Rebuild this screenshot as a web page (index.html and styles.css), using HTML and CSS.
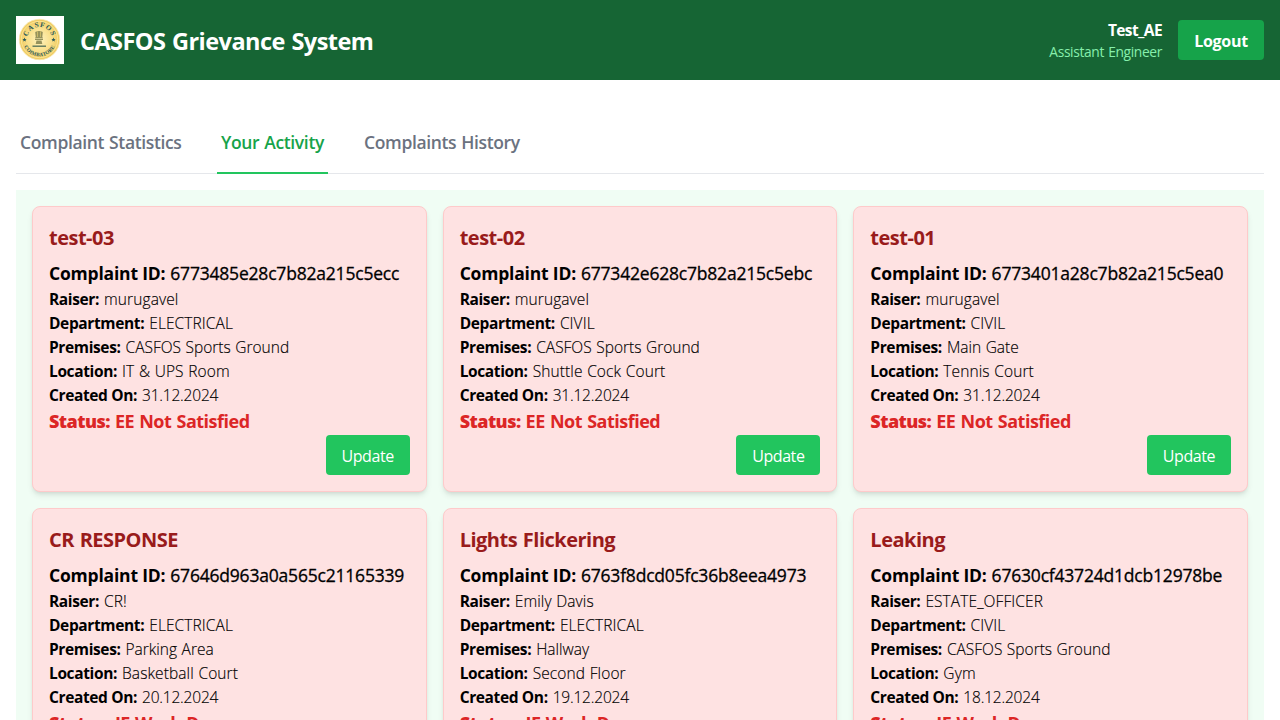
FILE: index.html
```
<!DOCTYPE html>
<html lang="en">
<head>
<meta charset="utf-8">
<title>CASFOS Grievance System</title>
<link rel="stylesheet" href="styles.css">
</head>
<body>
<header class="header">
  <div class="brand">
    <svg class="logo" viewBox="0 0 48 48" role="img" aria-label="CASFOS Coimbatore">
      <defs>
        <radialGradient id="gold"><stop offset="0" stop-color="#fff3bd"/><stop offset=".6" stop-color="#f9df8a"/><stop offset="1" stop-color="#efc95c"/></radialGradient>
        <path id="arc-top" d="M11 23.500a12.500 12.500 0 0 1 25 0"/>
        <path id="arc-bottom" d="M6.700 23.500a16.800 16.800 0 0 0 33.600 0"/>
      </defs>
      <rect width="48" height="48" fill="#fff"/>
      <circle cx="23.5" cy="23.5" r="20.2" fill="url(#gold)" stroke="#f8e7b0" stroke-width=".8"/>
      <circle cx="23.5" cy="23.5" r="18.2" fill="none" stroke="#fff0b0" stroke-width=".6"/>
      <text class="seal seal-top"><textPath href="#arc-top" startOffset="50%">CASFOS</textPath></text>
      <text class="seal seal-bottom"><textPath href="#arc-bottom" startOffset="50%">COIMBATORE</textPath></text>
      <path d="M8.5 21.500l.6 1.4 1.5.1-1.1 1 .3 1.5-1.3-.8-1.3.8.3-1.5-1.1-1 1.5-.1zM37.5 21.500l.6 1.4 1.5.1-1.1 1 .3 1.5-1.3-.8-1.3.8.3-1.5-1.1-1 1.5-.1z" fill="#28585a"/>
      <g fill="#85834e" opacity=".85"><path d="M19.200 16q4-2 7.600 0l-.5 5 .8 1.200h-8.200l.8-1.200z"/><path d="M19 22.800h8v1.200h-8zM20.500 24.500h5l.8 3.500h-6.600z"/><path d="M16.500 29.500h13.500v1.400h-13.500z" fill="#3e6251"/></g>
      <path d="M21.500 15.500v5.500M24.500 15.500v5.500" stroke="#dcc86e" stroke-width=".7"/>
    </svg>
    <h1 class="brand-name">CASFOS Grievance System</h1>
  </div>
  <div class="account">
    <div class="user"><p class="user-name">Test_AE</p><p class="user-role">Assistant Engineer</p></div>
    <button class="logout">Logout</button>
  </div>
</header>
<main class="main">
  <nav class="tabs">
    <button class="tab">Complaint Statistics</button>
    <button class="tab tab-active">Your Activity</button>
    <button class="tab tab-history">Complaints History</button>
  </nav>
  <section class="cards" id="cards"></section>
</main>
<script src="cards.js"></script>
</body>
</html>
```
FILE: cards.js
```
const complaints = [
  ["test-03", "6773485e28c7b82a215c5ecc", "murugavel", "ELECTRICAL", "CASFOS Sports Ground", "IT & UPS Room", "31.12.2024", "EE Not Satisfied"],
  ["test-02", "677342e628c7b82a215c5ebc", "murugavel", "CIVIL", "CASFOS Sports Ground", "Shuttle Cock Court", "31.12.2024", "EE Not Satisfied"],
  ["test-01", "6773401a28c7b82a215c5ea0", "murugavel", "CIVIL", "Main Gate", "Tennis Court", "31.12.2024", "EE Not Satisfied"],
  ["CR RESPONSE", "67646d963a0a565c21165339", "CR!", "ELECTRICAL", "Parking Area", "Basketball Court", "20.12.2024", "JE Work Done"],
  ["Lights Flickering", "6763f8dcd05fc36b8eea4973", "Emily Davis", "ELECTRICAL", "Hallway", "Second Floor", "19.12.2024", "JE Work Done"],
  ["Leaking", "67630cf43724d1dcb12978be", "ESTATE_OFFICER", "CIVIL", "CASFOS Sports Ground", "Gym", "18.12.2024", "JE Work Done"]
];
const labels = ["Complaint ID", "Raiser", "Department", "Premises", "Location", "Created On", "Status"];

function element(tag, className, text) {
  const node = document.createElement(tag);
  node.className = className;
  if (text) node.textContent = text;
  return node;
}

for (const [title, ...values] of complaints) {
  const card = element("article", "card");
  card.append(element("h2", "card-title", title));
  values.forEach((value, i) => {
    const name = labels[i].split(" ")[0].toLowerCase();
    const row = element("p", "row row-" + name);
    row.append(element("strong", "label", labels[i] + ":"), element("span", "value", value));
    card.append(row);
  });
  const actions = element("div", "actions");
  actions.append(element("button", "update", "Update"));
  card.append(actions);
  document.getElementById("cards").append(card);
}
```
FILE: styles.css
```
* { box-sizing: border-box; margin: 0; }
html { overflow: hidden; }
body { height: 720px; overflow: hidden; background: #fff; color: #000; font: 16px/24px "Open Sans", "Noto Sans", sans-serif; }
button { font: inherit; border: 0; padding: 0; background: none; }
.header { height: 80px; padding: 16px; background: #166534; color: #fff; display: flex; justify-content: space-between; align-items: center; }
.brand { display: flex; align-items: center; gap: 16px; }
.logo { width: 48px; height: 48px; display: block; }
.seal { font-family: "Liberation Serif", serif; font-weight: 700; fill: #28585a; text-anchor: middle; }
.seal-top { font-size: 7.2px; letter-spacing: .9px; }
.seal-bottom { font-size: 5.2px; letter-spacing: .2px; }
.brand-name { font-size: 23.5px; line-height: 32px; font-weight: 700; letter-spacing: -.54px; word-spacing: 1px; padding-top: 2px; }
.account { display: flex; align-items: center; gap: 16px; }
.user { text-align: right; }
.user-name { font-size: 15.5px; line-height: 24px; font-weight: 700; letter-spacing: -.6px; }
.user-role { font-size: 13.8px; line-height: 20px; color: #86efac; letter-spacing: -.36px; word-spacing: 1px; }
.logout { width: 86px; height: 40px; border-radius: 4px; background: #16a34a; color: #fff; font-weight: 700; letter-spacing: -.3px; padding-top: 1px; }
.main { padding: 32px 16px 16px; }
.tabs { height: 62px; display: flex; gap: 32px; border-bottom: 1px solid #e5e7eb; margin-bottom: 16px; }
.tab { width: 169px; height: 62px; padding-left: 4px; border-bottom: 2px solid transparent; color: #6b7280; font-size: 17.5px; line-height: 28px; font-weight: 600; letter-spacing: -.36px; word-spacing: .8px; text-align: left; white-space: nowrap; }
.tab-active { width: 111px; color: #16a34a; border-color: #22c55e; }
.tab-history { width: 165px; }
.cards { background: #f0fdf4; padding: 16px; display: grid; grid-template-columns: repeat(3, 1fr); gap: 16px; }
.card { min-width: 0; padding: 16px; border: 1px solid #fecaca; border-radius: 8px; background: #fee2e2; box-shadow: 0 4px 6px -1px rgba(0,0,0,.1), 0 2px 4px -2px rgba(0,0,0,.1); }
.card-title { font-size: 20px; line-height: 28px; font-weight: 700; color: #991b1b; letter-spacing: -.5px; word-spacing: 1px; padding-top: 1px; margin-bottom: 7px; }
.row { display: flex; gap: 5px; white-space: nowrap; font-size: 15.5px; font-weight: 300; }
.label { font-weight: 700; letter-spacing: -.37px; }
.value { letter-spacing: .1px; word-spacing: .5px; -webkit-text-stroke: .15px currentColor; }
.row-created .value { letter-spacing: -.2px; }
.row-premises .value { letter-spacing: 0; }
.row-complaint { font-size: 17.5px; line-height: 28px; font-weight: 500; }
.row-complaint .label { letter-spacing: -.2px; }
.row-complaint .value { letter-spacing: -.2px; -webkit-text-stroke-width: .3px; }
.row-status { font-size: 18px; line-height: 28px; font-weight: 700; color: #dc2626; }
.row-status .label { font-weight: 800; letter-spacing: -.55px; }
.row-status .value { letter-spacing: -.5px; word-spacing: 1px; -webkit-text-stroke-width: 0; }
.actions { display: flex; justify-content: flex-end; }
.update { width: 84px; height: 40px; border-radius: 4px; background: #22c55e; color: #fff; letter-spacing: -.42px; padding-top: 1px; }
```
